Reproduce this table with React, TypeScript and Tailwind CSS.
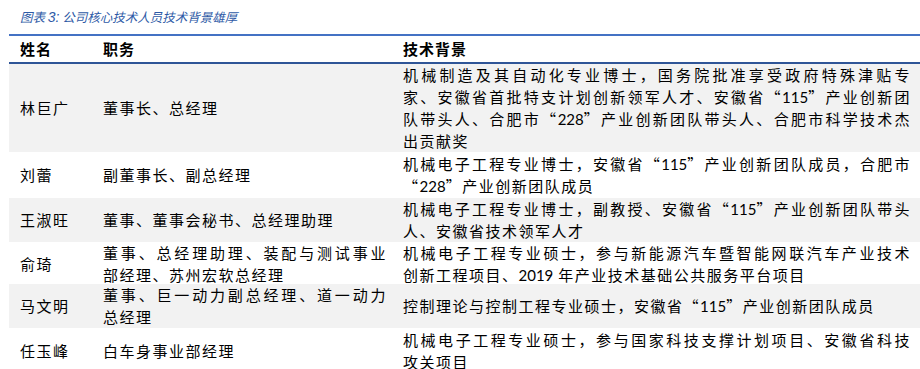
import React from "react";

const N = ({ children }: { children: React.ReactNode }) => (
  <span className="font-['Lato',sans-serif] text-[15px] tracking-normal">{children}</span>
);

type Line = React.ReactNode;

const Lines = ({ lines }: { lines: Line[] }) => (
  <div>
    {lines.map((l, i) => (
      <div
        key={i}
        className={
          i < lines.length - 1
            ? "text-justify [text-align-last:justify] leading-[22px]"
            : "text-left leading-[22px]"
        }
      >
        {l}
      </div>
    ))}
  </div>
);

const rows: { name: string; role: Line[]; bg: Line[]; h: string; gray: boolean }[] = [
  {
    name: "林巨广",
    role: ["董事长、总经理"],
    bg: [
      "机械制造及其自动化专业博士，国务院批准享受政府特殊津贴专",
      <>家、安徽省首批特支计划创新领军人才、安徽省“<N>115</N>”产业创新团</>,
      <>队带头人、合肥市“<N>228</N>”产业创新团队带头人、合肥市科学技术杰</>,
      "出贡献奖",
    ],
    h: "h-[88px]",
    gray: true,
  },
  {
    name: "刘蕾",
    role: ["副董事长、副总经理"],
    bg: [
      <>机械电子工程专业博士，安徽省“<N>115</N>”产业创新团队成员，合肥市</>,
      <>“<N>228</N>”产业创新团队成员</>,
    ],
    h: "h-[46px]",
    gray: false,
  },
  {
    name: "王淑旺",
    role: ["董事、董事会秘书、总经理助理"],
    bg: [
      <>机械电子工程专业博士，副教授、安徽省“<N>115</N>”产业创新团队带头</>,
      "人、安徽省技术领军人才",
    ],
    h: "h-[44px]",
    gray: true,
  },
  {
    name: "俞琦",
    role: ["董事、总经理助理、装配与测试事业", "部经理、苏州宏软总经理"],
    bg: [
      "机械电子工程专业硕士，参与新能源汽车暨智能网联汽车产业技术",
      <>创新工程项目、<N>2019</N> 年产业技术基础公共服务平台项目</>,
    ],
    h: "h-[42px]",
    gray: false,
  },
  {
    name: "马文明",
    role: ["董事、巨一动力副总经理、道一动力", "总经理"],
    bg: [<>控制理论与控制工程专业硕士，安徽省“<N>115</N>”产业创新团队成员</>],
    h: "h-[44px]",
    gray: true,
  },
  {
    name: "任玉峰",
    role: ["白车身事业部经理"],
    bg: ["机械电子工程专业硕士，参与国家科技支撑计划项目、安徽省科技", "攻关项目"],
    h: "h-[46px]",
    gray: false,
  },
];

export default function App() {
  return (
    <div
      lang="zh-CN"
      className="w-[920px] h-[369px] overflow-hidden bg-white text-black font-['Noto_Sans_CJK_SC',sans-serif] text-[15px] tracking-[1.5px]"
    >
      <div className="h-[34px] pl-[20px] pt-[9px] text-[12.5px] leading-[16px] italic text-[#2e5aa6] tracking-[0px]">
        图表 <span className="font-['Liberation_Sans',sans-serif] text-[14px]">3:</span> 公司核心技术人员技术背景雄厚
      </div>
      <div className="ml-[9px] border-t-2 border-[#4472c4]">
        <div className="grid grid-cols-[94px_300px_1fr] h-[28px] items-center border-b-2 border-[#2f5597] font-bold tracking-[1px]">
          <div className="pl-[11px]">姓名</div>
          <div>职务</div>
          <div>技术背景</div>
        </div>
        {rows.map((r, i) => (
          <div
            key={i}
            className={`grid grid-cols-[94px_300px_1fr] items-center ${r.h} ${r.gray ? "bg-[#f2f2f2]" : "bg-white"}`}
          >
            <div className="pl-[11px]">{r.name}</div>
            <div className="pr-[16px]">
              <Lines lines={r.role} />
            </div>
            <div className="pr-[9px]">
              <Lines lines={r.bg} />
            </div>
          </div>
        ))}
      </div>
    </div>
  );
}
